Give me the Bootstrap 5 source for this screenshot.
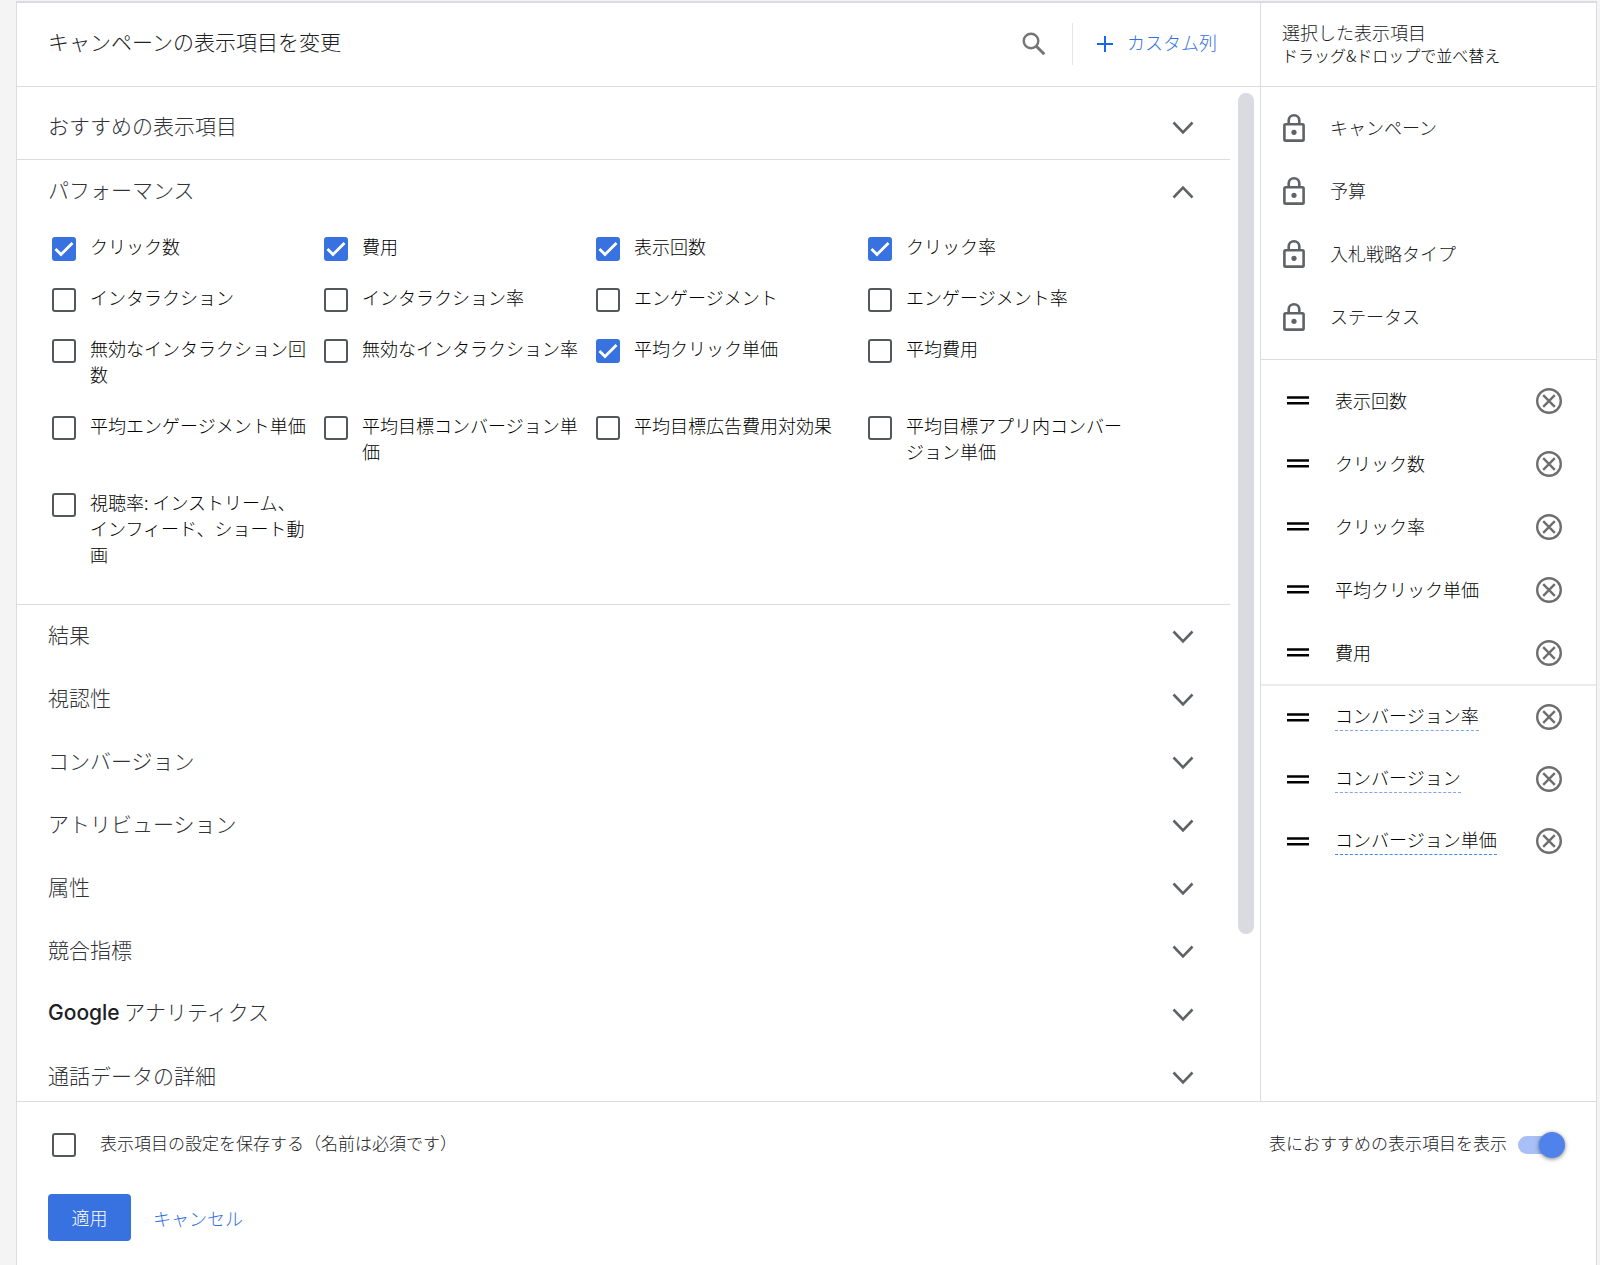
<!DOCTYPE html>
<html lang="ja">
<head>
<meta charset="utf-8">
<meta name="viewport" content="width=device-width, initial-scale=1">
<title>キャンペーンの表示項目を変更</title>
<link href="https://cdn.jsdelivr.net/npm/bootstrap@5.3.0/dist/css/bootstrap.min.css" rel="stylesheet">
<style>
  :root { --line: #dadce0; --blue: #3871e0; --icon: #5f6368; }
  body { background: #f4f4f4; color: #202124; font-family: "Noto Sans CJK JP", sans-serif; font-weight: 300; font-size: 18px; line-height: 26px; }
  .editor { height: 100vh; margin: 0 3px 0 16px; padding-top: 1px; }
  .panel { background: #fff; border: 1px solid var(--line); border-top-width: 2px; border-bottom: 0; }
  .fill { flex: 1 1 auto; min-height: 0; }
  .line-b { border-bottom: 1px solid var(--line); }
  .line-t { border-top: 1px solid var(--line); }
  .side { flex: 0 0 336px; border-left: 1px solid var(--line); }
  .head { height: 84px; flex: none; padding-bottom: 2px; }
  .side-head { padding-left: 21px; line-height: 23px; }
  .side-sub { font-size: 16px; color: #000; }
  .title { font-size: 21px; font-weight: 300; padding-left: 31px; }
  .head-tools { padding-right: 43px; }
  .tool-rule { width: 1px; height: 42px; background: #e4e5e8; margin: 0 24px 0 26px; }
  .custom-col { gap: 14px; }
  .plain { background: none; border: 0; padding: 0; color: inherit; font-weight: inherit; }
  .blue-text { color: #2f6fe4; }
  .scroll-list { padding-top: 9px; overflow: hidden; }
  .group-btn { height: 63px; width: 100%; padding: 0 36px 0 31px; font-size: 21px; color: #303438; text-align: left; }
  .latin { font-family: Inter, sans-serif; font-weight: 500; color: #202124; }
  .rail { flex: 0 0 30px; padding: 6px 6px 0 8px; }
  .thumb { height: calc(83% + 4px); border-radius: 8px; background: #dadbe0; }
  .options { padding: 10px 0 12px 35px; }
  .opt { flex: 0 0 272px; min-height: 51px; padding: 0 16px 25px 0; gap: 14px; color: #000; }
  .box.form-check-input { flex: none; width: 24px; height: 24px; margin: 4px 0 -4px; border: 2px solid #54575c; border-radius: 3px; }
  .box.form-check-input:checked { background-color: var(--blue); border-color: var(--blue); background-size: 24px 24px;
    background-image: url("data:image/svg+xml,%3Csvg xmlns='http://www.w3.org/2000/svg' viewBox='0 0 24 24'%3E%3Cpath d='M3.5 12l5.5 5.5L20.500 6' fill='none' stroke='%23fff' stroke-width='2.800'/%3E%3C/svg%3E"); background-position: center; }
  .locks { padding: 9px 0 11px; }
  .lock-row { height: 63px; padding-left: 20px; gap: 23px; }
  .picked { padding-top: 9px; }
  .pick-row { height: 63px; padding: 0 34px 0 26px; gap: 26px; color: #000; }
  .soft-line .pick-row { height: 62px; }
  .shift-up { padding-bottom: 4px; }
  .group-btn .shift-up { padding-bottom: 6px; }
  .side .shift-up { padding-bottom: 2px; }
  .soft-line { border-top: 2px solid #ececee; }
  .term { border-bottom: 1px dashed #7fa6ee; padding-bottom: 2px; margin-bottom: 2px; }
  .term-strong { border-color: #4285f4; }
  .foot { height: 164px; flex: none; padding: 28px 31px 0; font-size: 17px; }
  .foot .box.form-check-input { margin: 0; }
  .save-row { gap: 24px; padding-left: 4px; }
  .toggle-row { gap: 11px; }
  .toggle.form-check-input { position: relative; width: 47px; height: 26px; margin: 0; border: 0; background: none; box-shadow: none; border-radius: 13px; }
  .toggle::before { content: ""; position: absolute; left: 0; right: 8px; top: 4px; height: 18px; border-radius: 9px; background: #a8c0f5; }
  .toggle::after { content: ""; position: absolute; right: 0; top: 0; width: 26px; height: 26px; border-radius: 50%; background: #5082ec; box-shadow: 0 1px 4px rgba(0,0,0,.5); }
  .actions { margin-top: 34px; gap: 22px; font-size: 18px; }
  .apply.btn { background: var(--blue); color: #fff; border: 0; border-radius: 4px; height: 47px; width: 83px; padding: 0; font-size: 18px; font-weight: 300; }
  svg { display: block; flex: none; }
</style>
<script src="https://cdn.jsdelivr.net/npm/bootstrap@5.3.0/dist/js/bootstrap.bundle.min.js"></script>
</head>
<body>
<svg width="0" height="0" class="position-absolute" aria-hidden="true">
  <symbol id="down" viewBox="0 0 22 14"><path d="M1.500 1.500L11 11.300l9.500-9.800" fill="none" stroke="#5f6368" stroke-width="2.600"/></symbol>
  <symbol id="up" viewBox="0 0 22 14"><path d="M1.500 12.500L11 2.700l9.500 9.800" fill="none" stroke="#5f6368" stroke-width="2.600"/></symbol>
  <symbol id="lock" viewBox="0 0 26 30"><g fill="none" stroke="#5f6368" stroke-width="2.600"><rect x="3.400" y="11.200" width="19.200" height="16.400" rx="1.200"/><path d="M7.700 11V7.500a5.300 5.300 0 0 1 10.600 0V11"/></g><circle cx="13" cy="19.300" r="2.600" fill="#5f6368"/></symbol>
  <symbol id="grip" viewBox="0 0 22 9"><path d="M0 1.500h22M0 7.300h22" stroke="#000" stroke-width="2.600"/></symbol>
  <symbol id="remove" viewBox="0 0 26 26"><g fill="none" stroke="#6e6e6e" stroke-width="2.400"><circle cx="13" cy="13" r="11.800"/><path d="M7.200 7.200l11.600 11.600M18.800 7.200L7.200 18.800"/></g></symbol>
</svg>

<div class="editor d-flex flex-column">
<div class="panel d-flex flex-column fill">
  <div class="d-flex fill">
    <main class="d-flex flex-column fill">
      <header class="head line-b d-flex align-items-center justify-content-between">
        <h1 class="title m-0 shift-up">キャンペーンの表示項目を変更</h1>
        <div class="head-tools d-flex align-items-center">
          <button class="plain" type="button" aria-label="検索"><svg width="24" height="24" viewBox="0 0 24 24"><g fill="none" stroke="#757575"><circle cx="9" cy="9" r="7.300" stroke-width="2.400"/><path d="M14.300 14.300l8 8" stroke-width="3"/></g></svg></button>
          <div class="tool-rule"></div>
          <button class="plain blue-text custom-col d-flex align-items-center" type="button"><svg width="16" height="16" viewBox="0 0 16 16"><path d="M8 0v16M0 8h16" stroke="#1a66e8" stroke-width="2"/></svg><span class="shift-up">カスタム列</span></button>
        </div>
      </header>
      <div class="d-flex fill">
        <div class="scroll-list flex-grow-1">
          <div class="line-b"><button class="plain group-btn d-flex align-items-center justify-content-between" type="button" aria-expanded="false"><span class="shift-up">おすすめの表示項目</span><svg width="22" height="14"><use href="#down"/></svg></button></div>
          <section class="line-b">
            <button class="plain group-btn d-flex align-items-center justify-content-between" type="button" aria-expanded="true"><span class="shift-up">パフォーマンス</span><svg width="22" height="14"><use href="#up"/></svg></button>
            <div class="options d-flex flex-wrap">
              <label class="opt d-flex"><input class="form-check-input box" type="checkbox" checked><span>クリック数</span></label>
              <label class="opt d-flex"><input class="form-check-input box" type="checkbox" checked><span>費用</span></label>
              <label class="opt d-flex"><input class="form-check-input box" type="checkbox" checked><span>表示回数</span></label>
              <label class="opt d-flex"><input class="form-check-input box" type="checkbox" checked><span>クリック率</span></label>
              <label class="opt d-flex"><input class="form-check-input box" type="checkbox"><span>インタラクション</span></label>
              <label class="opt d-flex"><input class="form-check-input box" type="checkbox"><span>インタラクション率</span></label>
              <label class="opt d-flex"><input class="form-check-input box" type="checkbox"><span>エンゲージメント</span></label>
              <label class="opt d-flex"><input class="form-check-input box" type="checkbox"><span>エンゲージメント率</span></label>
              <label class="opt d-flex"><input class="form-check-input box" type="checkbox"><span>無効なインタラクション回数</span></label>
              <label class="opt d-flex"><input class="form-check-input box" type="checkbox"><span>無効なインタラクション率</span></label>
              <label class="opt d-flex"><input class="form-check-input box" type="checkbox" checked><span>平均クリック単価</span></label>
              <label class="opt d-flex"><input class="form-check-input box" type="checkbox"><span>平均費用</span></label>
              <label class="opt d-flex"><input class="form-check-input box" type="checkbox"><span>平均エンゲージメント単価</span></label>
              <label class="opt d-flex"><input class="form-check-input box" type="checkbox"><span>平均目標コンバージョン単価</span></label>
              <label class="opt d-flex"><input class="form-check-input box" type="checkbox"><span>平均目標広告費用対効果</span></label>
              <label class="opt d-flex"><input class="form-check-input box" type="checkbox"><span>平均目標アプリ内コンバージョン単価</span></label>
              <label class="opt d-flex"><input class="form-check-input box" type="checkbox"><span>視聴率: インストリーム、インフィード、ショート動画</span></label>
            </div>
          </section>
          <button class="plain group-btn d-flex align-items-center justify-content-between" type="button" aria-expanded="false"><span class="shift-up">結果</span><svg width="22" height="14"><use href="#down"/></svg></button>
          <button class="plain group-btn d-flex align-items-center justify-content-between" type="button" aria-expanded="false"><span class="shift-up">視認性</span><svg width="22" height="14"><use href="#down"/></svg></button>
          <button class="plain group-btn d-flex align-items-center justify-content-between" type="button" aria-expanded="false"><span class="shift-up">コンバージョン</span><svg width="22" height="14"><use href="#down"/></svg></button>
          <button class="plain group-btn d-flex align-items-center justify-content-between" type="button" aria-expanded="false"><span class="shift-up">アトリビューション</span><svg width="22" height="14"><use href="#down"/></svg></button>
          <button class="plain group-btn d-flex align-items-center justify-content-between" type="button" aria-expanded="false"><span class="shift-up">属性</span><svg width="22" height="14"><use href="#down"/></svg></button>
          <button class="plain group-btn d-flex align-items-center justify-content-between" type="button" aria-expanded="false"><span class="shift-up">競合指標</span><svg width="22" height="14"><use href="#down"/></svg></button>
          <button class="plain group-btn d-flex align-items-center justify-content-between" type="button" aria-expanded="false"><span class="shift-up"><span class="latin">Google</span> アナリティクス</span><svg width="22" height="14"><use href="#down"/></svg></button>
          <button class="plain group-btn d-flex align-items-center justify-content-between" type="button" aria-expanded="false"><span class="shift-up">通話データの詳細</span><svg width="22" height="14"><use href="#down"/></svg></button>
        </div>
        <div class="rail"><div class="thumb"></div></div>
      </div>
    </main>

    <aside class="side d-flex flex-column">
      <div class="head side-head line-b d-flex flex-column justify-content-center">
        <div>選択した表示項目</div>
        <div class="side-sub">ドラッグ&amp;ドロップで並べ替え</div>
      </div>
      <div class="locks line-b">
        <div class="lock-row d-flex align-items-center"><svg width="26" height="30"><use href="#lock"/></svg><span class="shift-up">キャンペーン</span></div>
        <div class="lock-row d-flex align-items-center"><svg width="26" height="30"><use href="#lock"/></svg><span class="shift-up">予算</span></div>
        <div class="lock-row d-flex align-items-center"><svg width="26" height="30"><use href="#lock"/></svg><span class="shift-up">入札戦略タイプ</span></div>
        <div class="lock-row d-flex align-items-center"><svg width="26" height="30"><use href="#lock"/></svg><span class="shift-up">ステータス</span></div>
      </div>
      <div class="picked">
        <div class="pick-row d-flex align-items-center"><svg width="22" height="9"><use href="#grip"/></svg><span class="shift-up">表示回数</span><button class="plain ms-auto" type="button" aria-label="削除"><svg width="26" height="26"><use href="#remove"/></svg></button></div>
        <div class="pick-row d-flex align-items-center"><svg width="22" height="9"><use href="#grip"/></svg><span class="shift-up">クリック数</span><button class="plain ms-auto" type="button" aria-label="削除"><svg width="26" height="26"><use href="#remove"/></svg></button></div>
        <div class="pick-row d-flex align-items-center"><svg width="22" height="9"><use href="#grip"/></svg><span class="shift-up">クリック率</span><button class="plain ms-auto" type="button" aria-label="削除"><svg width="26" height="26"><use href="#remove"/></svg></button></div>
        <div class="pick-row d-flex align-items-center"><svg width="22" height="9"><use href="#grip"/></svg><span class="shift-up">平均クリック単価</span><button class="plain ms-auto" type="button" aria-label="削除"><svg width="26" height="26"><use href="#remove"/></svg></button></div>
        <div class="pick-row d-flex align-items-center"><svg width="22" height="9"><use href="#grip"/></svg><span class="shift-up">費用</span><button class="plain ms-auto" type="button" aria-label="削除"><svg width="26" height="26"><use href="#remove"/></svg></button></div>
      </div>
      <div class="soft-line">
        <div class="pick-row d-flex align-items-center"><svg width="22" height="9"><use href="#grip"/></svg><span class="term">コンバージョン率</span><button class="plain ms-auto" type="button" aria-label="削除"><svg width="26" height="26"><use href="#remove"/></svg></button></div>
        <div class="pick-row d-flex align-items-center"><svg width="22" height="9"><use href="#grip"/></svg><span class="term">コンバージョン</span><button class="plain ms-auto" type="button" aria-label="削除"><svg width="26" height="26"><use href="#remove"/></svg></button></div>
        <div class="pick-row d-flex align-items-center"><svg width="22" height="9"><use href="#grip"/></svg><span class="term term-strong">コンバージョン単価</span><button class="plain ms-auto" type="button" aria-label="削除"><svg width="26" height="26"><use href="#remove"/></svg></button></div>
      </div>
    </aside>
  </div>

  <footer class="foot line-t">
    <div class="d-flex align-items-center justify-content-between">
      <label class="save-row d-flex align-items-center"><input class="form-check-input box" type="checkbox"><span class="shift-up">表示項目の設定を保存する（名前は必須です）</span></label>
      <label class="toggle-row d-flex align-items-center"><span class="shift-up">表におすすめの表示項目を表示</span><input class="form-check-input toggle" type="checkbox" role="switch" checked></label>
    </div>
    <div class="actions d-flex align-items-center">
      <button class="btn apply" type="button">適用</button>
      <button class="plain blue-text" type="button">キャンセル</button>
    </div>
  </footer>
</div>
</div>
</body>
</html>
